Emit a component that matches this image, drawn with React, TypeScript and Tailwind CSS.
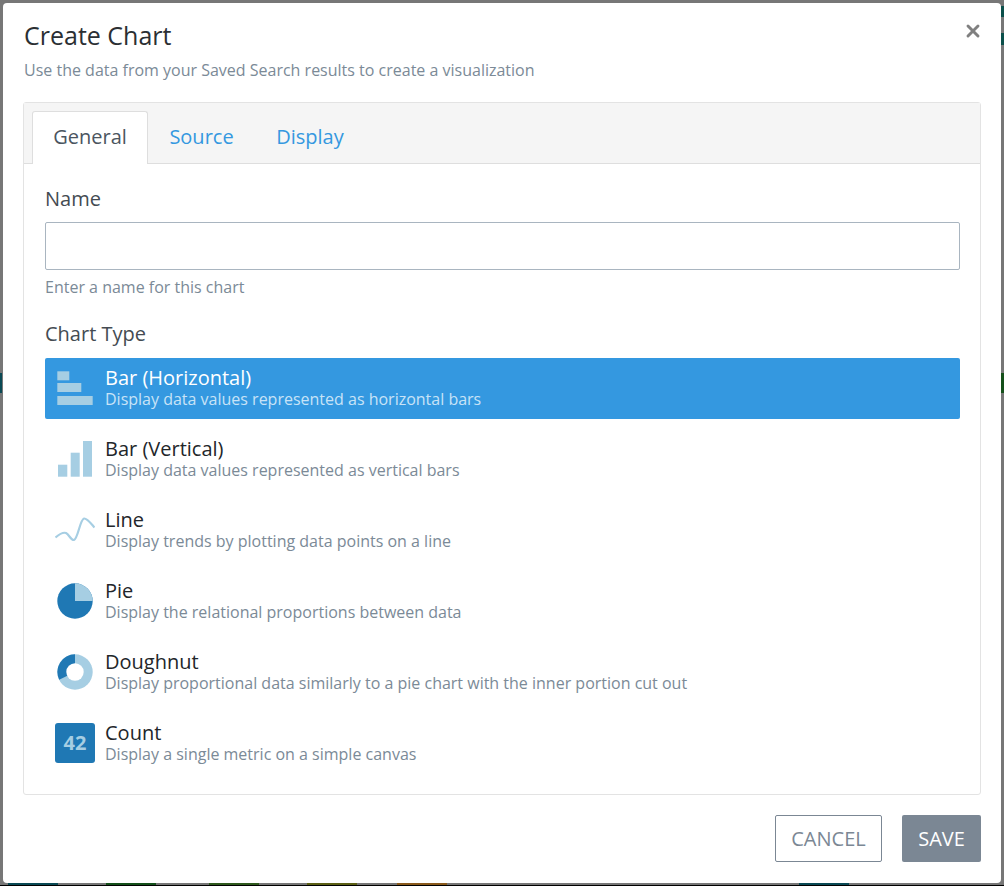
import { X } from "lucide-react";

const lightBlue = "#a6cee3";
const darkBlue = "#1f78b4";

const BarHorizontalIcon = () => (
  <svg width="40" height="40" viewBox="0 0 40 40" fill={lightBlue}>
    <rect x="2.3" y="3.3" width="12" height="9" />
    <rect x="2.3" y="15" width="24" height="9" />
    <rect x="2.3" y="28" width="35.4" height="9" />
  </svg>
);

const BarVerticalIcon = () => (
  <svg width="40" height="40" viewBox="0 0 40 40" fill={lightBlue}>
    <rect x="3" y="25.7" width="9.3" height="12" />
    <rect x="15.7" y="13.7" width="9" height="24" />
    <rect x="28" y="2" width="9" height="35.7" />
  </svg>
);

const LineIcon = () => (
  <svg width="40" height="40" viewBox="0 0 40 40" fill="none" stroke={lightBlue} strokeWidth="2.2">
    <path d="M0.5 27.5 C4 24.5 8 22 11 23 C14 24.5 16 30.5 19 30 C23 28.5 25 9.5 29 8.5 C32 8 36 13.5 39.5 17.5" />
  </svg>
);

const PieIcon = () => (
  <svg width="40" height="40" viewBox="0 0 40 40">
    <circle cx="20" cy="20" r="17.7" fill={darkBlue} />
    <path d="M20 2.3 A17.7 17.7 0 0 1 37.7 20 L20 20 Z" fill={lightBlue} />
  </svg>
);

const DoughnutIcon = () => (
  <svg width="40" height="40" viewBox="0 0 40 40">
    <circle cx="20" cy="20" r="17.7" fill={lightBlue} />
    <path d="M20 2.3 A17.7 17.7 0 0 0 4.2 27.8 L20 20 Z" fill={darkBlue} />
    <circle cx="20" cy="20" r="8.7" fill="#fff" />
  </svg>
);

const CountIcon = () => (
  <div className="flex h-10 w-10 items-center justify-center rounded-[3px] bg-[#1f78b4] text-[20px] font-bold text-[#a6cee3]">
    42
  </div>
);

const chartTypes = [
  { name: "Bar (Horizontal)", text: "Display data values represented as horizontal bars", icon: <BarHorizontalIcon /> },
  { name: "Bar (Vertical)", text: "Display data values represented as vertical bars", icon: <BarVerticalIcon /> },
  { name: "Line", text: "Display trends by plotting data points on a line", icon: <LineIcon /> },
  { name: "Pie", text: "Display the relational proportions between data", icon: <PieIcon /> },
  { name: "Doughnut", text: "Display proportional data similarly to a pie chart with the inner portion cut out", icon: <DoughnutIcon /> },
  { name: "Count", text: "Display a single metric on a simple canvas", icon: <CountIcon /> },
];

export default function App() {
  return (
    <div className="relative flex h-[886px] w-[1004px] flex-col overflow-hidden bg-[#777777] pt-[3px] font-['Open_Sans',sans-serif]">
      {/* bits of the page behind the backdrop */}
      <div className="absolute top-[6px] right-0 h-[11px] w-[3px] bg-[#0b4f4a]" />
      <div className="absolute top-[33px] right-0 h-[12px] w-[3px] bg-[#0b4f4a]" />
      <div className="absolute top-[373px] right-0 h-[20px] w-[3px] bg-[#14501a]" />
      <div className="absolute top-[373px] left-0 h-[20px] w-[2px] bg-[#0b4a55]" />

      <div className="relative ml-[3px] flex h-[880px] w-[998px] shrink-0 flex-col rounded-[4px] bg-white pr-[20px] pl-[20px]">
        <button className="absolute top-[18px] right-[18px] text-[#808080]">
          <X size={20} strokeWidth={3.5} />
        </button>

        <h1 className="mt-[15px] ml-px text-[25px] leading-[34px] text-[#2b2f33]">Create Chart</h1>
        <p className="mt-[8px] ml-px text-[16px] leading-[20px] text-[#7b8a97]">
          Use the data from your Saved Search results to create a visualization
        </p>

        <div className="mt-[22px] h-[693px] rounded-[3px] border border-[#e3e3e3]">
          <div className="flex h-[61px] items-end border-b border-[#dedede] bg-[#f5f5f5] pl-[8px] text-[20px]">
            <div className="-mb-px flex h-[53px] w-[116px] items-center justify-center rounded-t-[3px] border border-b-0 border-[#dedede] bg-white pb-[2px] text-[#4b5560]">
              General
            </div>
            <div className="flex h-[52px] w-[107px] items-center justify-center text-[#3498e0]">Source</div>
            <div className="flex h-[52px] w-[110px] items-center justify-center text-[#3498e0]">Display</div>
          </div>

          <div className="pt-[21px] pr-[20px] pl-[21px]">
            <label className="block text-[20px] leading-[28px] text-[#444b52]">Name</label>
            <input className="mt-[9px] block h-[48px] w-full rounded-[2px] border border-[#a9b5c0] bg-white" />
            <p className="mt-[7px] text-[16px] leading-[20px] text-[#7b8a97]">Enter a name for this chart</p>
            <label className="mt-[23px] block text-[20px] leading-[28px] text-[#444b52]">Chart Type</label>

            <div className="mt-[10px] flex flex-col gap-[10px]">
              {chartTypes.map((c, i) => (
                <div
                  key={c.name}
                  className={`flex h-[61px] items-start gap-[10px] rounded-[2px] pt-[10px] pl-[10px] ${i === 0 ? "bg-[#3498e0]" : ""}`}
                >
                  {c.icon}
                  <div className="-mt-[1px]">
                    <div className={`text-[20px] leading-[22px] ${i === 0 ? "text-white" : "text-[#22262a]"}`}>{c.name}</div>
                    <div className={`text-[16px] leading-[20px] ${i === 0 ? "text-[#c8e3f7]" : "text-[#7b8a97]"}`}>{c.text}</div>
                  </div>
                </div>
              ))}
            </div>
          </div>
        </div>

        <div className="mt-[20px] flex justify-end gap-[20px]">
          <button className="h-[47px] w-[107px] rounded-[2px] border border-[#7b8794] bg-white text-[20px] text-[#7b8794]">CANCEL</button>
          <button className="h-[47px] w-[79px] rounded-[2px] bg-[#7b8794] text-[20px] text-white">SAVE</button>
        </div>
      </div>

      <div className="flex h-[3px] shrink-0 border-b border-black">
        <div className="ml-[8px] w-[50px] bg-[#0b4a55]" />
        <div className="ml-[48px] w-[50px] bg-[#14501a]" />
        <div className="ml-[53px] w-[50px] bg-[#2f5a1e]" />
        <div className="ml-[48px] w-[50px] bg-[#5c6015]" />
        <div className="ml-[40px] w-[50px] bg-[#8a5a1c]" />
        <div className="ml-[352px] w-[50px] bg-[#0b4a55]" />
      </div>
    </div>
  );
}
